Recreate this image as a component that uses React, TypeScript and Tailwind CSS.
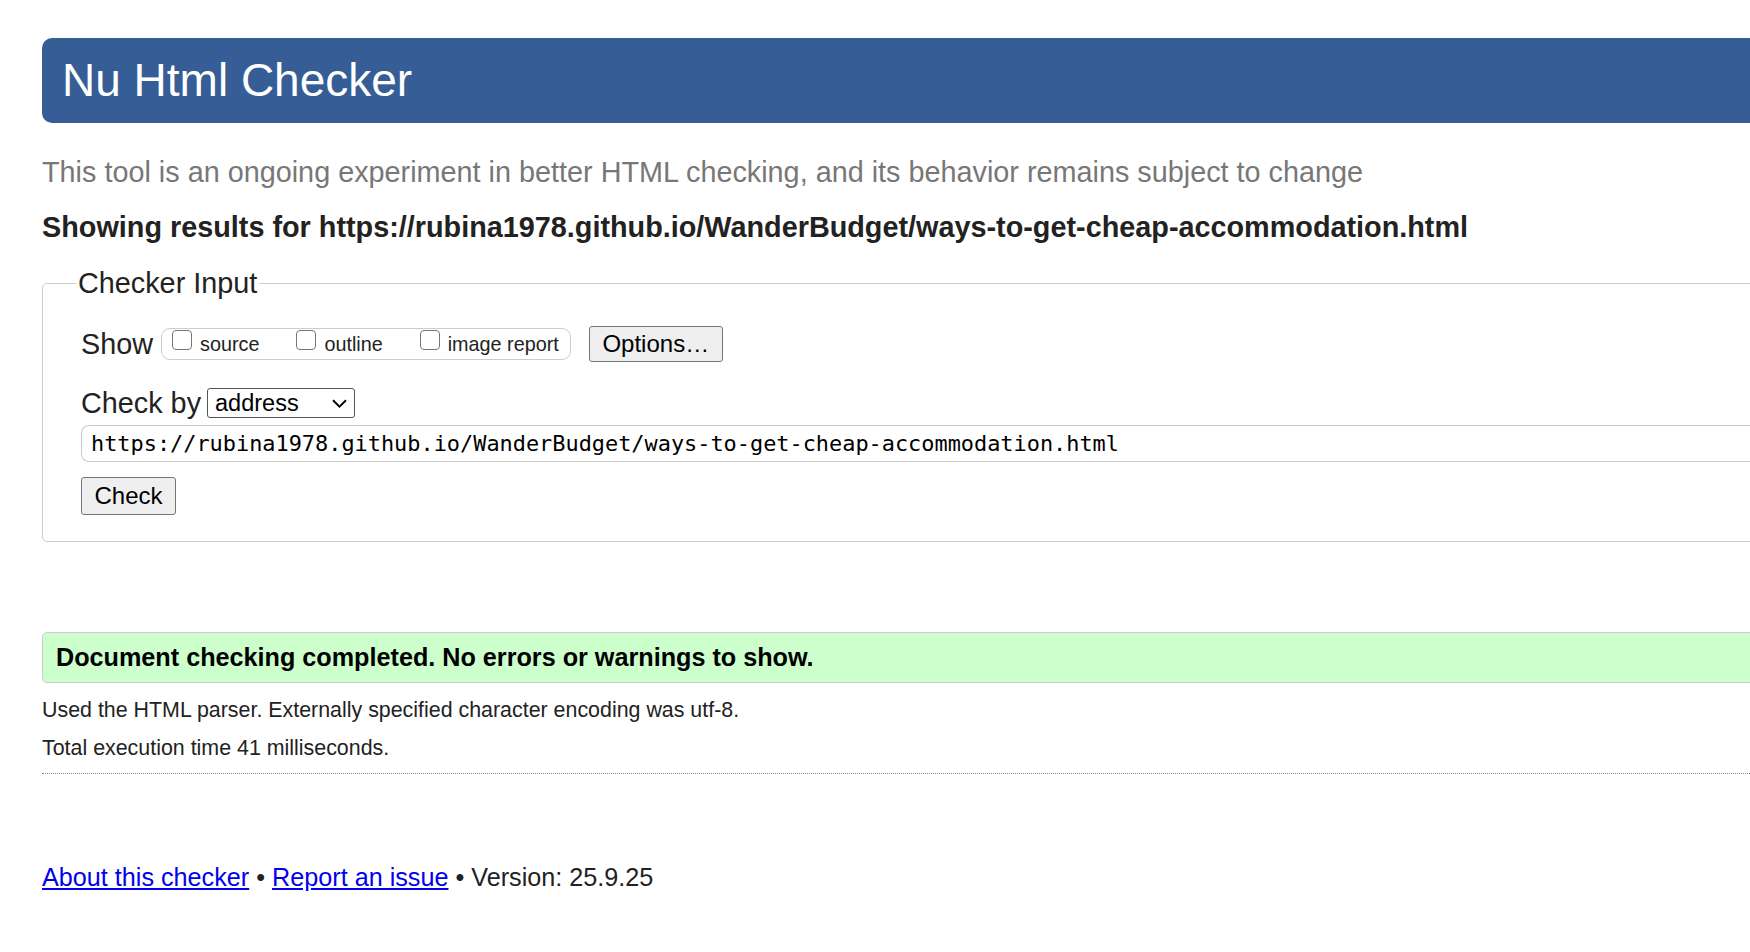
function Box({ label }: { label: string }) {
  return (
    <label className="flex items-start">
      <span className="mt-[1px] mr-[8px] inline-block h-[20px] w-[20px] rounded-[4px] border-[1.5px] border-[#767676] bg-white"></span>
      <span className="text-[19.8px] leading-[30px] text-[#222]">{label}</span>
    </label>
  );
}

export default function App() {
  return (
    <div
      className="h-[952px] w-screen overflow-hidden bg-white text-[#222]"
      style={{ fontFamily: '"Liberation Sans", Arial, sans-serif' }}
    >
      <div className="ml-[42px] w-[1900px]">
        <h1 className="mt-[38px] flex h-[85px] items-center rounded-[10px] bg-[#365d95] pl-[20px] text-[46px] text-white">
          Nu Html Checker
        </h1>

        <p className="mt-[34px] text-[28.8px] leading-[30px] text-[#777]">
          This tool is an ongoing experiment in better HTML checking, and its behavior remains subject to change
        </p>

        <p className="mt-[25px] text-[28.8px] font-bold leading-[30px] text-[#222]">
          Showing results for https://rubina1978.github.io/WanderBudget/ways-to-get-cheap-accommodation.html
        </p>

        <fieldset className="mt-[26px] rounded-[5px] border border-[#ccc] pb-[26px] pl-[38px]">
          <legend className="ml-[-5px] px-[2px] text-[28.8px] leading-[30px] text-[#222]">
            Checker Input
          </legend>

          <div className="mt-[28px] flex h-[36px] items-center">
            <span className="text-[28.8px] leading-[30px]">Show</span>
            <div className="ml-[8px] flex h-[32px] items-start gap-[37px] rounded-[9px] border border-[#ccc] pl-[10px] pr-[11px]">
              <Box label="source" />
              <Box label="outline" />
              <Box label="image report" />
            </div>
            <button className="ml-[18px] h-[36px] w-[134px] rounded-[3px] border border-[#767676] bg-[#efefef] text-[24px] leading-[30px] text-black">
              Options…
            </button>
          </div>

          <div className="mt-[26px] flex h-[30px] items-center">
            <span className="text-[28.8px] leading-[30px]">Check by</span>
            <div className="ml-[6px] flex h-[30px] w-[148px] items-center justify-between rounded-[3px] border border-[#555] pl-[7px] pr-[7px]">
              <span className="text-[23.5px] leading-[28px] text-black">address</span>
              <svg width="15" height="9" viewBox="0 0 15 9" fill="none" className="mt-[1px]">
                <path d="M1 1.2 L7.5 7.6 L14 1.2" stroke="#000" strokeWidth="1.9" />
              </svg>
            </div>
          </div>

          <div className="mt-[7px] flex h-[37px] items-center rounded-l-[8px] border border-r-0 border-[#ccc] pl-[9px]">
            <span
              className="text-[21.9px] leading-[30px] text-black"
              style={{ fontFamily: '"DejaVu Sans Mono", "Liberation Mono", monospace' }}
            >
              https://rubina1978.github.io/WanderBudget/ways-to-get-cheap-accommodation.html
            </span>
          </div>

          <button className="mt-[15px] h-[38px] w-[95px] rounded-[3px] border border-[#767676] bg-[#efefef] text-[24px] leading-[30px] text-black">
            Check
          </button>
        </fieldset>

        <div className="mt-[90px] flex h-[51px] items-center rounded-[5px] border border-[#ccc] bg-[#ccffcc] pl-[13px]">
          <span className="text-[25.2px] font-bold text-black">
            Document checking completed. No errors or warnings to show.
          </span>
        </div>

        <p className="mt-[14px] text-[21.4px] leading-[26px]">
          Used the HTML parser. Externally specified character encoding was utf-8.
        </p>
        <p className="mt-[12px] text-[21.4px] leading-[26px]">Total execution time 41 milliseconds.</p>

        <div className="mt-[12px] border-t border-dotted border-[#888]"></div>

        <p className="mt-[88px] text-[25.2px] leading-[30px]">
          <a href="#" className="text-[#0000ee] underline">About this checker</a>
          {" • "}
          <a href="#" className="text-[#0000ee] underline">Report an issue</a>
          {" • Version: 25.9.25"}
        </p>
      </div>
    </div>
  );
}
